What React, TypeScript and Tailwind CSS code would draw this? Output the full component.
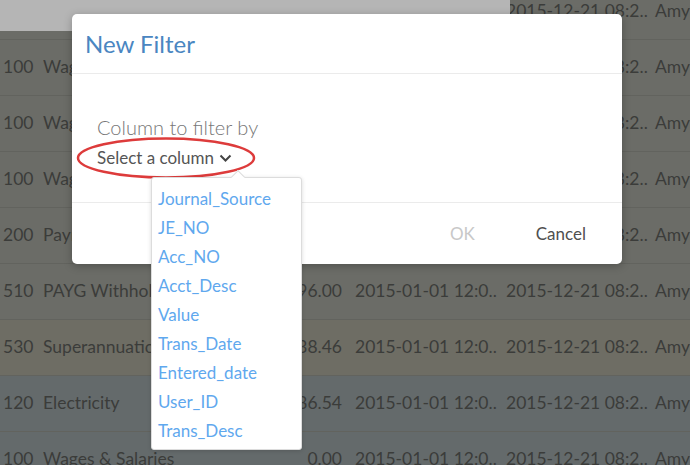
import React from "react";

const rows = [
  { no: "100", desc: "Wages & Salaries", amt: "1,250.00", bg: "bg-[#6b6c67]" },
  { no: "100", desc: "Wages & Salaries", amt: "1,250.00", bg: "bg-[#6b6c67]" },
  { no: "100", desc: "Wages & Salaries", amt: "1,250.00", bg: "bg-[#6b6c67]" },
  { no: "100", desc: "Wages & Salaries", amt: "1,250.00", bg: "bg-[#6b6c67]" },
  { no: "200", desc: "Payroll Clearing", amt: "3,100.00", bg: "bg-[#6b6c67]" },
  { no: "510", desc: "PAYG Withholding", amt: "2,196.00", bg: "bg-[#6b6c67]" },
  { no: "530", desc: "Superannuation", amt: "338.46", bg: "bg-[#6e6d64]" },
  { no: "120", desc: "Electricity", amt: "186.54", bg: "bg-[#646a6b]" },
  { no: "100", desc: "Wages & Salaries", amt: "0.00", bg: "bg-[#646a6b]" },
];

const items = [
  "Journal_Source",
  "JE_NO",
  "Acc_NO",
  "Acct_Desc",
  "Value",
  "Trans_Date",
  "Entered_date",
  "User_ID",
  "Trans_Desc",
];

export default function App() {
  return (
    <div
      className="relative w-[690px] h-[465px] overflow-hidden bg-[#6b6c67]"
      style={{ fontFamily: "Lato, 'Noto Sans', sans-serif" }}
    >
      {/* background table */}
      <div className="-mt-[16px] flex flex-col text-[17.5px] text-[#3b3c3a]">
        {rows.map((r, i) => (
          <div
            key={i}
            className={`h-[56px] flex items-center whitespace-nowrap border-b border-[#62635e] ${r.bg}`}
          >
            <div className="w-[43px] pl-[3px] shrink-0">{r.no}</div>
            <div className="w-[200px] shrink-0 overflow-hidden">{r.desc}</div>
            <div className="w-[99px] shrink-0 text-right">{r.amt}</div>
            <div className="w-[164px] shrink-0 pl-[13px] overflow-hidden">2015-01-01 12:0..</div>
            <div className="w-[149px] shrink-0 overflow-hidden">2015-12-21 08:2..</div>
            <div className="shrink-0">Amy</div>
          </div>
        ))}
      </div>

      {/* light band top-left */}
      <div className="absolute left-0 top-0 w-[510px] h-[31px] bg-[#b5b5b5]" />

      {/* dialog */}
      <div className="absolute left-[72px] top-[14px] w-[550px] h-[250px] bg-white rounded-[5px] flex flex-col shadow-[0_2px_8px_rgba(0,0,0,0.25)]">
        <div className="h-[60px] px-[13px] flex items-center border-b border-[#ebebeb]">
          <span className="text-[24px] text-[#4a86c1] leading-none">New Filter</span>
        </div>
        <div className="h-[128px] pl-[25px] pt-[41px] flex flex-col items-start">
          <div className="text-[20px] leading-[24px] font-light text-[#777]">Column to filter by</div>
          <div className="mt-[8px] flex items-center gap-[5px] text-[17px] leading-[22px] text-[#555]">
            <span>Select a column</span>
            <svg width="13" height="9" viewBox="0 0 13 9" className="mt-[1px]">
              <polyline points="1.5,1.5 6.5,6.5 11.5,1.5" fill="none" stroke="#444" strokeWidth="2" />
            </svg>
          </div>
        </div>
        <div className="flex-1 border-t border-[#ebebeb] flex items-center justify-end pr-[36px] gap-[61px] text-[17px]">
          <span className="text-[#c8c8c8]">OK</span>
          <span className="text-[#4f4f4f]">Cancel</span>
        </div>
      </div>

      {/* red ellipse */}
      <svg className="absolute left-[76px] top-[137px]" width="180" height="42" viewBox="0 0 180 42">
        <ellipse cx="90" cy="21" rx="88" ry="19.5" fill="none" stroke="#dd3b3b" strokeWidth="2.5" />
      </svg>

      {/* dropdown */}
      <div className="absolute left-[151px] top-[177px] w-[151px] h-[273px] bg-white border border-[#dcdcdc] rounded-[3px] shadow-[0_1px_4px_rgba(0,0,0,0.15)]">
        <div className="absolute left-[81px] -top-[6px] w-[10px] h-[10px] bg-white border-l border-t border-[#dcdcdc] rotate-45" />
        <div className="relative pt-[6px] pl-[6px] flex flex-col text-[17px] text-[#5fa8ee]">
          {items.map((it) => (
            <div key={it} className="h-[29px] leading-[29px]">
              {it}
            </div>
          ))}
        </div>
      </div>
    </div>
  );
}
